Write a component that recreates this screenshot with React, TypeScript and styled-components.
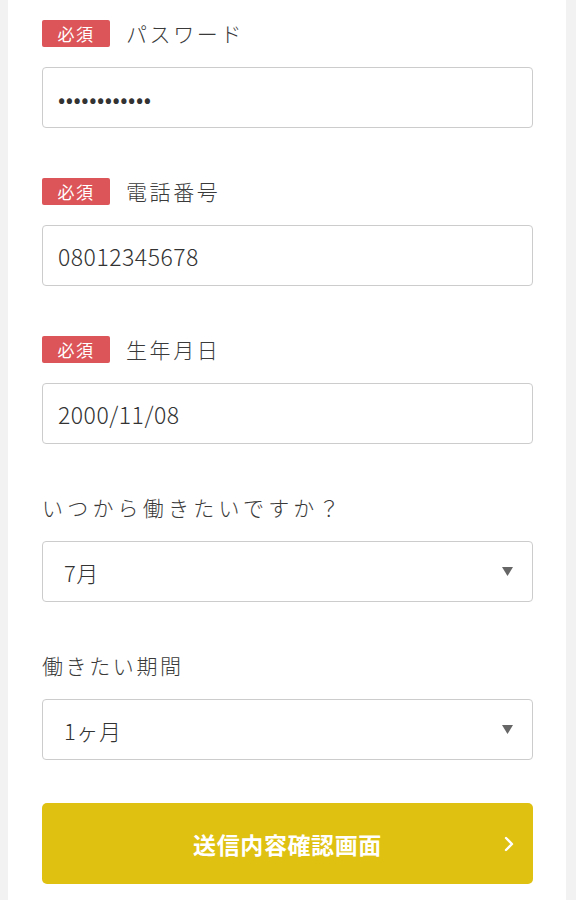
import React from 'react'
import styled, { createGlobalStyle } from 'styled-components'

const GlobalStyle = createGlobalStyle`
  html, body {
    margin: 0;
    padding: 0;
    background: #f2f2f2;
    font-family: "Noto Sans CJK JP", "Noto Sans", sans-serif;
    color: #3a3a3a;
  }
`

const Panel = styled.div`
  margin: 0 10px 0 8px;
  min-height: 900px;
  background: #ffffff;
  padding: 20px 33px 0 34px;
  box-sizing: border-box;
`

const Field = styled.div`
  display: flex;
  flex-direction: column;
  gap: 20px;
  margin-bottom: 50px;
`

const LabelRow = styled.div`
  display: flex;
  align-items: center;
  gap: 16px;
  height: 27px;
`

const Badge = styled.span`
  display: inline-flex;
  align-items: center;
  justify-content: center;
  width: 68px;
  height: 27px;
  border-radius: 2px;
  background: #dc5558;
  color: #ffffff;
  font-size: 17px;
  letter-spacing: 1.5px;
`

const LabelText = styled.span<{ $wide?: boolean }>`
  font-size: 21px;
  font-weight: 300;
  line-height: 27px;
  color: #3a3a3a;
  letter-spacing: ${p => (p.$wide ? '4.2px' : '2.6px')};
`

const TextInput = styled.input`
  box-sizing: border-box;
  width: 100%;
  height: 61px;
  border: 1px solid #cccccc;
  border-radius: 4px;
  padding: 0 15px;
  font-family: "Noto Sans CJK JP", "Noto Sans", sans-serif;
  font-size: 23px;
  font-weight: 300;
  letter-spacing: 0.5px;
  color: #333333;
  background: #ffffff;
  outline: none;
`

const SelectWrap = styled.div`
  position: relative;
`

const Select = styled.select`
  box-sizing: border-box;
  width: 100%;
  height: 61px;
  border: 1px solid #cccccc;
  border-radius: 4px;
  padding: 0 40px 0 21px;
  font-family: "Noto Sans CJK JP", "Noto Sans", sans-serif;
  font-size: 22px;
  font-weight: 300;
  letter-spacing: 0.6px;
  color: #333333;
  background: #ffffff;
  appearance: none;
  outline: none;
`

const Arrow = styled.svg`
  position: absolute;
  right: 20px;
  top: 26px;
  pointer-events: none;
`

const SubmitButton = styled.button`
  position: relative;
  display: flex;
  align-items: center;
  justify-content: center;
  width: 100%;
  height: 81px;
  margin-top: -7px;
  border: none;
  border-radius: 5px;
  background: #dfc111;
  color: #ffffff;
  font-family: "Noto Sans CJK JP", "Noto Sans", sans-serif;
  font-size: 23px;
  font-weight: 700;
  letter-spacing: 0.6px;
  cursor: pointer;
`

const Chevron = styled.svg`
  position: absolute;
  right: 19px;
  top: 33px;
`

const SelectField = ({ label, value, options, wide }: { label: string; value: string; options: string[]; wide?: boolean }) => (
  <Field>
    <LabelRow>
      <LabelText $wide={wide}>{label}</LabelText>
    </LabelRow>
    <SelectWrap>
      <Select defaultValue={value}>
        {options.map(o => (
          <option key={o} value={o}>{o}</option>
        ))}
      </Select>
      <Arrow width="11" height="9" viewBox="0 0 11 9">
        <polygon points="0,0 11,0 5.5,9" fill="#666666" />
      </Arrow>
    </SelectWrap>
  </Field>
)

const RequiredField = ({ label, value, type = 'text' }: { label: string; value: string; type?: string }) => (
  <Field>
    <LabelRow>
      <Badge>必須</Badge>
      <LabelText>{label}</LabelText>
    </LabelRow>
    <TextInput type={type} defaultValue={value} readOnly />
  </Field>
)

const App = () => {
  return (
    <>
      <GlobalStyle />
      <Panel>
        <RequiredField label="パスワード" value="password1234" type="password" />
        <RequiredField label="電話番号" value="08012345678" />
        <RequiredField label="生年月日" value="2000/11/08" />
        <SelectField label="いつから働きたいですか？" value="7月" options={['4月', '5月', '6月', '7月', '8月', '9月']} wide />
        <SelectField label="働きたい期間" value="1ヶ月" options={['1ヶ月', '2ヶ月', '3ヶ月', '6ヶ月']} />
        <SubmitButton type="button">
          送信内容確認画面
          <Chevron width="10" height="16" viewBox="0 0 10 16">
            <polyline points="2,2 8,8 2,14" fill="none" stroke="#ffffff" strokeWidth="2.4" strokeLinecap="round" strokeLinejoin="round" />
          </Chevron>
        </SubmitButton>
      </Panel>
    </>
  )
}

export default App
